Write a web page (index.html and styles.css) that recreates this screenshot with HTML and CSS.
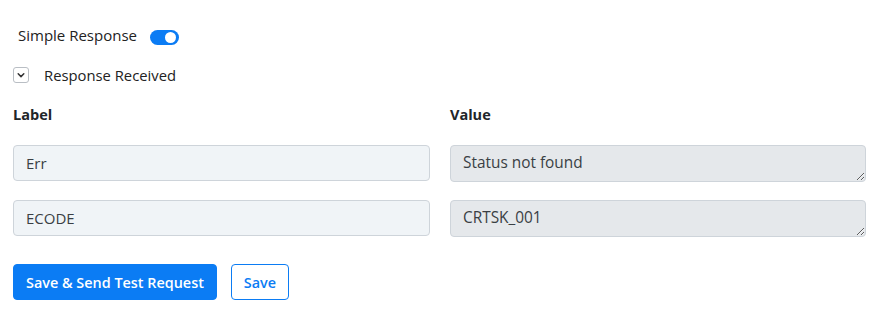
FILE: index.html
```html
<!DOCTYPE html>
<html>
<head>
<meta charset="utf-8">
<link rel="stylesheet" href="styles.css">
</head>
<body>
<div class="page">
  <div class="row-toggle">
    <span class="toggle-label">Simple Response</span>
    <span class="switch"><span class="knob"></span></span>
  </div>
  <div class="row-collapse">
    <span class="chev">
      <svg width="10" height="10" viewBox="0 0 10 10"><path d="M2.2 3.8 L5 6.6 L7.8 3.8" fill="none" stroke="#333" stroke-width="1.5" stroke-linecap="round" stroke-linejoin="round"/></svg>
    </span>
    <span class="collapse-label">Response Received</span>
  </div>
  <div class="grid">
    <div class="col-head">Label</div>
    <div class="col-head">Value</div>
    <input class="field" type="text" value="Err" readonly>
    <textarea class="area" readonly rows="1">Status not found</textarea>
    <input class="field" type="text" value="ECODE" readonly>
    <textarea class="area" readonly rows="1">CRTSK_001</textarea>
  </div>
  <div class="actions">
    <button class="btn btn-primary">Save &amp; Send Test Request</button>
    <button class="btn btn-outline">Save</button>
  </div>
</div>
</body>
</html>
```
FILE: styles.css
```css
* { box-sizing: border-box; }
html, body { margin: 0; padding: 0; background: #fff; }
body { font-family: "Open Sans", Lato, sans-serif; color: #212529; font-size: 14px; }
.page { padding: 24px 12px 0 13px; }
.row-toggle { display: flex; align-items: center; padding-left: 5px; height: 22px; }
.toggle-label { font-size: 15px; color: #222; }
.switch { margin-left: 13px; width: 29px; height: 15px; border-radius: 8px; background: #0b7cf4; position: relative; display: inline-block; margin-top: 4px; }
.knob { position: absolute; right: 3px; top: 2px; width: 11px; height: 11px; border-radius: 50%; background: #fff; }
.row-collapse { display: flex; align-items: center; margin-top: 21px; height: 16px; }
.chev { width: 16px; height: 16px; border: 1px solid #b9bec4; border-radius: 3px; display: flex; align-items: center; justify-content: center; }
.collapse-label { margin-left: 15px; font-size: 14.8px; color: #222; }
.grid { display: grid; grid-template-columns: 417px 416px; column-gap: 20px; margin-top: 21px; }
.col-head { font-weight: 700; font-size: 14.5px; color: #212529; height: 41px; line-height: 22px; }
.field, .area { font-family: "Open Sans", Lato, sans-serif; font-size: 15px; color: #3a3f44; border: 1px solid #ced4da; border-radius: 4px; height: 36px; margin-bottom: 18px; padding: 0 12px; outline: none; }
.field { background: #f0f4f7; width: 417px; }
.area { background: #e5e8eb; width: 416px; resize: vertical; padding: 6px 12px 5px; line-height: 22px; overflow: hidden; display: block; height: 37px; font-size: 15.4px; }
.actions { display: flex; gap: 14px; margin-top: 9px; }
.btn { font-family: "Open Sans", Lato, sans-serif; font-size: 14.4px; font-weight: 600; height: 36px; border-radius: 4px; padding: 0 12px; cursor: pointer; }
.btn-primary { background: #0b7cf4; color: #fff; border: 1px solid #0b7cf4; }
.btn-outline { background: #fff; color: #0b7cf4; border: 1px solid #0b7cf4; }
```
